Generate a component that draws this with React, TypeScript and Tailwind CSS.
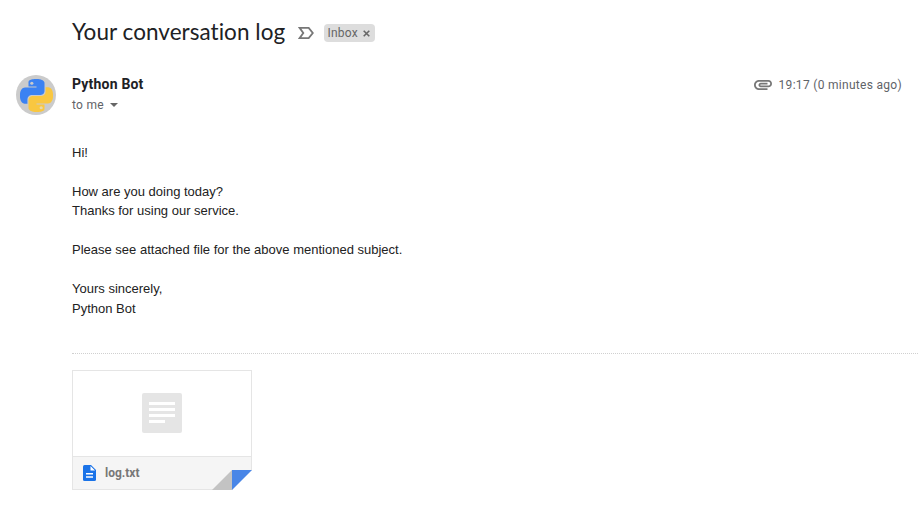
const BLUE_SNAKE =
  'M14.25.18l.9.2.73.26.59.3.45.32.34.34.25.34.16.33.1.3.04.26.02.2-.01.13V8.5l-.05.63-.13.55-.21.46-.26.38-.3.31-.33.25-.35.19-.35.14-.33.1-.3.07-.26.04-.21.02H8.77l-.69.05-.59.14-.5.22-.41.27-.33.32-.27.35-.2.36-.15.37-.1.35-.07.32-.04.27-.02.21v3.06H3.17l-.21-.03-.28-.07-.32-.12-.35-.18-.36-.26-.36-.36-.35-.46-.32-.59-.28-.73-.21-.88-.14-1.05-.05-1.23.06-1.22.16-1.04.24-.87.32-.71.36-.57.4-.44.42-.33.42-.24.4-.16.36-.1.32-.05.24-.01h.16l.06.01h8.16v-.83H6.18l-.01-2.75-.02-.37.05-.34.11-.31.17-.28.25-.26.31-.23.38-.2.44-.18.51-.15.58-.12.64-.1.71-.06.77-.04.84-.02 1.27.05z';

function Avatar() {
  return (
    <div className="flex size-10 shrink-0 items-center justify-center rounded-full bg-[#cbcbcb]">
      <svg viewBox="0 0 24 24" className="size-[33px]">
        <path d={BLUE_SNAKE} fill="#3b82f2" />
        <path d={BLUE_SNAKE} fill="#f9c740" transform="rotate(180 12 12)" />
        <circle cx="8.6" cy="3.1" r="1.15" fill="#cbcbcb" />
        <circle cx="15.4" cy="20.9" r="1.15" fill="#e6d9ae" />
      </svg>
    </div>
  );
}

function Subject() {
  return (
    <header className="flex h-8 items-center pl-14">
      <h1 className="-mt-0.5 w-[226px] whitespace-nowrap font-['Lato',sans-serif] text-[22.5px] leading-8 tracking-[.04px] text-[#202124] [font-variant-ligatures:none]">
        Your conversation log
      </h1>
      <svg viewBox="0 0 16 12" className="h-3 w-4 shrink-0" fill="none" stroke="#777" strokeWidth="1.8">
        <path d="M1.6 .9H10.7L14.8 6L10.7 11.1H1.6L5.3 6Z" />
      </svg>
      <span className="ml-2.5 flex h-[18px] w-[51px] items-center rounded bg-[#ddd] pl-[3.5px] text-xs tracking-[.2px] text-[#666]">
        Inbox
        <svg viewBox="0 0 8 8" className="ml-[5px] size-[7px]" stroke="#666" strokeWidth="1.8">
          <path d="M.8 .8L7.2 7.2M7.2 .8L.8 7.2" />
        </svg>
      </span>
    </header>
  );
}

function Sender() {
  return (
    <section className="mt-[26px] flex pr-4">
      <Avatar />
      <div className="ml-4 flex-1">
        <div className="h-5 text-sm leading-[19px] font-bold tracking-[.2px] text-[#202124]">Python Bot</div>
        <div className="flex items-center text-xs leading-5 tracking-[.3px] text-[#5f6368]">
          to me
          <svg viewBox="0 0 8 4" className="ml-1.5 h-1 w-2" fill="#666">
            <path d="M0 0H8L4 4Z" />
          </svg>
        </div>
      </div>
      <div className="flex h-5 items-center text-xs tracking-[.3px] text-[#5f6368]">
        <svg viewBox="2 7 20 11" className="mr-[7px] h-[10px] w-[18px]" preserveAspectRatio="none" fill="#777">
          <path d="M2 12.5C2 9.46 4.46 7 7.5 7H18c2.21 0 4 1.79 4 4s-1.79 4-4 4H9.5C8.12 15 7 13.88 7 12.5S8.12 10 9.5 10H17v2H9.41c-.55 0-.55 1 0 1H18c1.1 0 2-.9 2-2s-.9-2-2-2H7.5C5.57 9 4 10.57 4 12.5S5.57 16 7.5 16H17v2H7.5C4.46 18 2 15.54 2 12.5z" />
        </svg>
        19:17 (0 minutes ago)
      </div>
    </section>
  );
}

function Attachment() {
  return (
    <div className="relative mt-4 ml-14 flex h-[120px] w-[180px] flex-col border border-[#e5e5e5]">
      <div className="flex h-[85px] items-center justify-center">
        <svg viewBox="0 0 40 40" className="size-10">
          <rect width="40" height="40" rx="2" fill="#e5e5e5" />
          <path d="M7 9h26v3H7zM7 15h26v3H7zM7 21h26v3H7zM7 27h16v3H7z" fill="#fff" />
        </svg>
      </div>
      <div className="flex flex-1 items-center border-t border-[#e5e5e5] bg-[#f5f5f5] pl-2.5">
        <svg viewBox="0 0 13 16" className="h-4 w-[13px]">
          <path d="M1.5 0H8L13 5V14.5Q13 16 11.5 16H1.5Q0 16 0 14.5V1.5Q0 0 1.5 0Z" fill="#1a73e8" />
          <path d="M7.5 1L12 5.5H7.5ZM3 8h7v1.5H3zM3 11.2h7v1.5H3z" fill="#fff" />
        </svg>
        <span className="ml-[9px] text-xs font-bold text-[#777]">log.txt</span>
      </div>
      <svg viewBox="0 0 40 20" className="absolute -right-px -bottom-px h-5 w-10">
        <path d="M20 20H40V0Z" fill="#fff" />
        <path d="M0 20L20 0V20Z" fill="#c3c3c3" />
        <path d="M20 0H40L20 20Z" fill="#4986e7" />
      </svg>
    </div>
  );
}

export default function App() {
  return (
    <main className="h-[511px] w-[918px] overflow-hidden bg-white pt-[17px] pl-4 font-['Roboto',sans-serif]">
      <Subject />
      <Sender />
      <div className="mt-[27.8px] ml-14 font-['Liberation_Sans',Arial,sans-serif] text-[13px] leading-[19.5px] text-[#222]">
        <p>Hi!</p>
        <p className="mt-[19.5px]">How are you doing today?</p>
        <p>Thanks for using our service.</p>
        <p className="mt-[19.5px]">Please see attached file for the above mentioned subject.</p>
        <p className="mt-[19.5px]">Yours sincerely,</p>
        <p>Python Bot</p>
      </div>
      <hr className="mt-[34.5px] ml-14 border-t border-dotted border-[#d0d0d0]" />
      <Attachment />
    </main>
  );
}
